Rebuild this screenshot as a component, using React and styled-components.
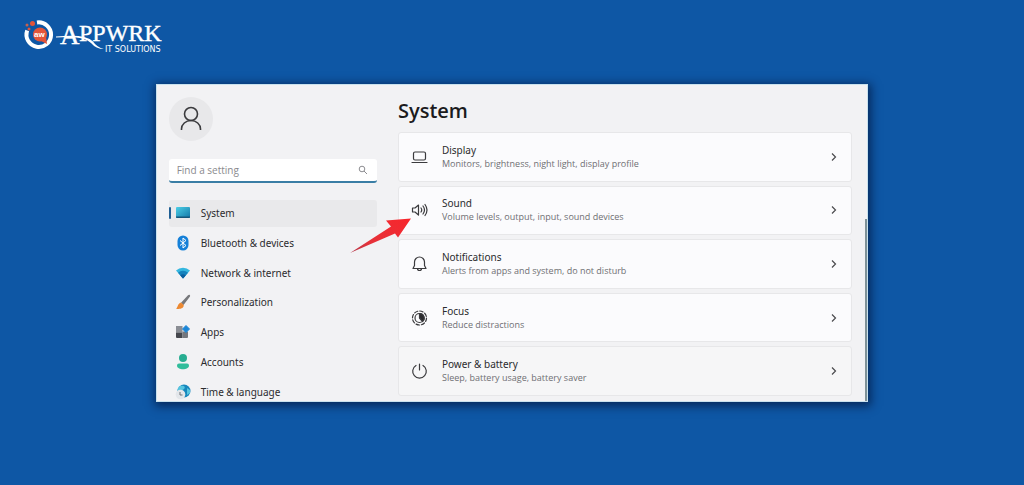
import React from "react";
import styled, { createGlobalStyle } from "styled-components";

const GlobalStyle = createGlobalStyle`
  * {
    box-sizing: border-box;
  }
  body {
    margin: 0;
    background: #0e57a5;
    font-family: "Noto Sans", "Open Sans", sans-serif;
  }
`;

const navItems = [
  { label: "System", icon: SystemIcon, active: true },
  { label: "Bluetooth & devices", icon: BluetoothIcon },
  { label: "Network & internet", icon: NetworkIcon },
  { label: "Personalization", icon: BrushIcon },
  { label: "Apps", icon: AppsIcon },
  { label: "Accounts", icon: AccountsIcon },
  { label: "Time & language", icon: TimeIcon },
];

const settings = [
  { title: "Display", text: "Monitors, brightness, night light, display profile", icon: DisplayIcon },
  { title: "Sound", text: "Volume levels, output, input, sound devices", icon: SoundIcon, pointed: true },
  { title: "Notifications", text: "Alerts from apps and system, do not disturb", icon: BellIcon },
  { title: "Focus", text: "Reduce distractions", icon: FocusIcon },
  { title: "Power & battery", text: "Sleep, battery usage, battery saver", icon: PowerIcon },
];

export default function App() {
  return (
    <Page>
      <GlobalStyle />
      <Header>
        <Logo />
      </Header>
      <Window>
        <Sidebar>
          <Avatar>
            <UserIcon />
          </Avatar>
          <Search>
            <SearchInput type="search" placeholder="Find a setting" aria-label="Find a setting" />
            <SearchIcon />
          </Search>
          <Nav>
            {navItems.map(({ label, icon: Icon, active }) => (
              <NavLink key={label} href="#" $active={active}>
                <Icon />
                {label}
              </NavLink>
            ))}
          </Nav>
        </Sidebar>
        <Main>
          <Title>System</Title>
          <List>
            {settings.map(({ title, text, icon: Icon, pointed }) => (
              <Card key={title} type="button">
                <Icon />
                <CardText>
                  <CardTitle>{title}</CardTitle>
                  <CardInfo>{text}</CardInfo>
                </CardText>
                <Chevron />
                {pointed && <Arrow />}
              </Card>
            ))}
          </List>
        </Main>
        <Scrollbar />
      </Window>
    </Page>
  );
}

const Page = styled.div`
  min-height: 100vh;
`;

const Header = styled.header`
  height: 84px;
  padding: 16px 22px;
`;

const Window = styled.div`
  display: flex;
  width: 69.6%;
  min-height: 318px;
  margin: 0 auto;
  overflow: hidden;
  background: #f2f2f4;
  border: 1px solid #c9e2ee;
  box-shadow: 1px 2px 9px 2px rgba(0, 15, 50, 0.65);
`;

const Sidebar = styled.aside`
  display: flex;
  flex-direction: column;
  flex: 0 0 31%;
  padding: 12px 0 0 12px;
`;

const Avatar = styled.div`
  display: flex;
  align-items: center;
  justify-content: center;
  width: 44px;
  height: 44px;
  border-radius: 50%;
  background: #e8e8ea;
`;

const Search = styled.div`
  display: flex;
  align-items: center;
  height: 24px;
  margin: 18px 0 17px;
  padding: 0 9px 0 8px;
  background: #fff;
  border-bottom: 2px solid #3a7ea5;
  border-radius: 3px;
`;

const SearchInput = styled.input`
  flex: 1;
  min-width: 0;
  padding: 0;
  border: 0;
  outline: 0;
  background: none;
  font: 10px/16px "Open Sans", sans-serif;
  color: #333;
  &::placeholder {
    color: #8a8a8e;
  }
`;

const Nav = styled.nav`
  display: grid;
  flex: 1;
  grid-auto-rows: 1fr;
  gap: 3px;
  margin-bottom: -4px;
`;

const NavLink = styled.a`
  display: flex;
  align-items: center;
  gap: 10px;
  border-radius: 3px;
  background: ${(p) => (p.$active ? "#e9e9eb" : "none")};
  font-size: 10px;
  line-height: 16px;
  color: #2b2b2e;
  text-decoration: none;
  &::before {
    content: "";
    width: 2px;
    height: 12px;
    margin-right: -6px;
    border-radius: 1px;
    background: ${(p) => (p.$active ? "#1f5f94" : "transparent")};
  }
`;

const Main = styled.main`
  display: flex;
  flex-direction: column;
  flex: 1;
  padding: 10px 13px 5px 21px;
`;

const Title = styled.h1`
  margin: 0 0 5px;
  font-family: "Open Sans", sans-serif;
  font-size: 20px;
  line-height: 32px;
  font-weight: 600;
  color: #1b1b1d;
`;

const List = styled.div`
  display: grid;
  flex: 1;
  grid-auto-rows: 1fr;
  gap: 4px;
`;

const Card = styled.button`
  position: relative;
  display: flex;
  align-items: center;
  gap: 14px;
  padding: 0 12px;
  border: 1px solid #e7e7e9;
  border-radius: 3px;
  background: #fbfbfd;
  font-family: inherit;
  text-align: left;
  &:last-child {
    background: #f6f6f7;
  }
`;

const CardText = styled.span`
  display: flex;
  flex-direction: column;
  flex: 1;
`;

const CardTitle = styled.span`
  font-size: 10px;
  line-height: 13px;
  color: #2b2b2e;
`;

const CardInfo = styled.span`
  font-family: "Open Sans", sans-serif;
  font-size: 9px;
  line-height: 13px;
  color: #6f6f73;
`;

const Scrollbar = styled.div`
  width: 2px;
  margin-top: 134px;
  background: #7f9298;
`;

const ArrowSvg = styled.svg`
  position: absolute;
  left: -50px;
  top: 30px;
`;

function Arrow() {
  return (
    <ArrowSvg width="64" height="38" viewBox="0 0 64 38" aria-hidden="true">
      <defs>
        <linearGradient id="arrow" x1="0" y1="1" x2="1" y2="0">
          <stop offset="0" stopColor="#b0384a" />
          <stop offset="0.3" stopColor="#e5323a" />
          <stop offset="1" stopColor="#f8262c" />
        </linearGradient>
      </defs>
      <path d="M1 36 42 9.500 37 3.500 62 1.500 49 20.500 46 16.500Z" fill="url(#arrow)" />
    </ArrowSvg>
  );
}

function Logo() {
  return (
    <svg width="148" height="40" viewBox="0 0 148 40" role="img" aria-label="APPWRK IT Solutions">
      <path d="M15 6.500a12.300 12.300 0 1 1-9.800 8" fill="none" stroke="#fff" strokeWidth="4" />
      <circle cx="18" cy="18.500" r="7" fill="#e2553a" />
      <path d="m19 25 6 3-1-7z" fill="#e2553a" />
      <text x="12" y="21" fontFamily="Liberation Sans" fontSize="8" fontWeight="700" fill="#fff">aw</text>
      <circle cx="10.500" cy="7.500" r="2.500" fill="#e2553a" />
      <circle cx="5" cy="9" r="1.500" fill="#c4604f" />
      <circle cx="7" cy="13" r="1.500" fill="#e2553a" />
      <g fill="#fff" stroke="#fff" strokeWidth="0.400" fontFamily="Liberation Serif">
        <text x="38" y="28" fontSize="27">A</text>
        <text x="57" y="25" fontSize="24">PPWRK</text>
      </g>
      <path d="M34 20.500q30-3 37 5 4 6 11 7.500-8 0-13-6-7-8-35-5.500z" fill="#fff" />
      <text x="83" y="36" fontFamily="DejaVu Sans" fontSize="8" fill="#fff">IT SOLUTIONS</text>
    </svg>
  );
}

function UserIcon() {
  return (
    <svg width="24" height="26" viewBox="0 0 24 26" fill="none" stroke="#3b3b3e" strokeWidth="1.600">
      <circle cx="12" cy="8" r="6.500" />
      <path d="M2.500 24v-1a9.500 8.500 0 0 1 19 0v1" />
    </svg>
  );
}

function SearchIcon() {
  return (
    <svg width="10" height="10" viewBox="0 0 10 10" fill="none" stroke="#8d8d91" strokeWidth="1">
      <circle cx="4" cy="4" r="2.800" />
      <path d="m6 6 3 3" />
    </svg>
  );
}

function SystemIcon() {
  return (
    <svg width="16" height="16" viewBox="0 0 16 16">
      <defs>
        <linearGradient id="screen" x1="0" y1="0" x2="1" y2="1">
          <stop offset="0" stopColor="#4ccfe6" />
          <stop offset="1" stopColor="#1277a8" />
        </linearGradient>
      </defs>
      <rect x="1" y="2" width="14" height="11" rx="1" fill="url(#screen)" />
      <path d="M1 11.500h14v.5a1 1 0 0 1-1 1H2a1 1 0 0 1-1-1z" fill="#14567b" />
    </svg>
  );
}

function BluetoothIcon() {
  return (
    <svg width="16" height="16" viewBox="0 0 16 16">
      <rect x="2.500" y="0.500" width="11" height="15" rx="5.500" fill="#1580d8" />
      <path d="m5 5.500 6 5L8 13V3l3 2.500-6 5" fill="none" stroke="#fff" strokeWidth="1" />
    </svg>
  );
}

function NetworkIcon() {
  return (
    <svg width="16" height="16" viewBox="0 0 16 16">
      <path d="M1 5.500a10.500 10.500 0 0 1 14 0L8 13.500z" fill="#35b7df" />
      <path d="M3 7.800a7.300 7.300 0 0 1 10 0l-5 5.700z" fill="#1583bd" />
      <path d="M5.300 10.400a4 4 0 0 1 5.400 0L8 13.500z" fill="#0c5f9d" />
    </svg>
  );
}

function BrushIcon() {
  return (
    <svg width="16" height="16" viewBox="0 0 16 16">
      <path d="M14.500.8c.8.500.8 1.200.3 2L8.500 11 6 8.800l7-7.500c.5-.5 1-.8 1.500-.5z" fill="#77787b" />
      <path d="M6 8.500 8.700 11c.3 3-3 4.500-7.700 3.700C3 13.500 2.500 9.500 6 8.500z" fill="#ec8932" />
    </svg>
  );
}

function AppsIcon() {
  return (
    <svg width="16" height="16" viewBox="0 0 16 16">
      <path d="M1 2h6.500v6.500H1z" fill="#8b8e94" />
      <path d="M1 8.500h6.500V14H2a1 1 0 0 1-1-1z" fill="#45474d" />
      <path d="M7.500 7.500H13V13a1 1 0 0 1-1 1H7.500z" fill="#74777d" />
      <path d="m11 1.500 3.500 3.500L11 8.500 7.500 5z" fill="#1c86d6" stroke="#1c86d6" strokeLinejoin="round" />
    </svg>
  );
}

function AccountsIcon() {
  return (
    <svg width="16" height="16" viewBox="0 0 16 16">
      <circle cx="8" cy="4" r="4" fill="#27ad91" />
      <path d="M4 9.500h8a2 2 0 0 1 2 2c0 5-12 5-12 0a2 2 0 0 1 2-2z" fill="#31bd9b" />
    </svg>
  );
}

function TimeIcon() {
  return (
    <svg width="16" height="16" viewBox="0 0 16 16">
      <circle cx="9" cy="7" r="6.500" fill="#1787bd" />
      <path d="M5 2c4-1 6 1 4 3S5 6 3 8c-1-2 0-5 2-6zM12 4l3 2v3l-3 2z" fill="#56c5df" />
      <circle cx="5.500" cy="10.500" r="4.800" fill="#e3e6ea" />
      <path d="M5 8v3h2.500" fill="none" stroke="#6d7278" />
    </svg>
  );
}

const LineIcon = styled.svg`
  flex: none;
  width: 17px;
  height: 18px;
  fill: none;
  stroke: #3a3a3d;
  stroke-width: 1.2;
  stroke-linecap: round;
  stroke-linejoin: round;
`;

function DisplayIcon() {
  return (
    <LineIcon viewBox="0 0 17 18">
      <rect x="2.500" y="4" width="12" height="8" rx="1.500" />
      <path d="M1 14.500h15" />
    </LineIcon>
  );
}

function SoundIcon() {
  return (
    <LineIcon viewBox="0 0 17 18">
      <path d="M1.500 7v4h2.500l3.500 3V4L4 7zM10 7q1.500 2 0 4M12 5q3 4 0 8M14 3.500q4 5.500 0 11" />
    </LineIcon>
  );
}

function BellIcon() {
  return (
    <LineIcon viewBox="0 0 17 18">
      <path d="M2 13.500 3.500 10.500V7a5 5 0 0 1 10 0v3.500L15 13.500zM6.500 13.500a2 2 0 0 0 4 0" />
    </LineIcon>
  );
}

function FocusIcon() {
  return (
    <LineIcon viewBox="0 0 17 18">
      <circle cx="8.500" cy="9" r="7" strokeDasharray="3.500 2" />
      <circle cx="8.500" cy="9" r="4.500" />
      <path d="M8.500 4.500a4.500 4.500 0 0 1 3 8l-3-3.500z" fill="#2b2b2e" />
    </LineIcon>
  );
}

function PowerIcon() {
  return (
    <LineIcon viewBox="0 0 17 18">
      <path d="M8.500 2v6M5 3.500a6.800 6.800 0 1 0 7 0" />
    </LineIcon>
  );
}

function Chevron() {
  return (
    <svg width="10" height="10" viewBox="0 0 10 10" fill="none" stroke="#4a4a4d" strokeWidth="1.200">
      <path d="m3 1.500 3.500 3.500L3 8.500" />
    </svg>
  );
}
